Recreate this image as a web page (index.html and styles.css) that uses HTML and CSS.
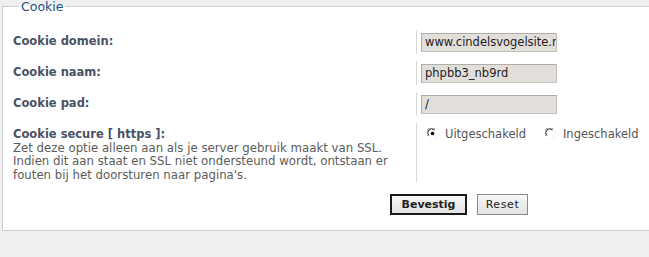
FILE: index.html
```html
<!DOCTYPE html>
<html>
<head>
<meta charset="utf-8">
<link rel="stylesheet" href="styles.css">
</head>
<body>
<fieldset class="panel">
  <legend class="panel-title">Cookie</legend>
  <div class="row">
    <div class="row-label"><span class="label">Cookie domein:</span></div>
    <div class="row-field"><span class="textbox">www.cindelsvogelsite.nl</span></div>
  </div>
  <div class="row">
    <div class="row-label"><span class="label">Cookie naam:</span></div>
    <div class="row-field"><span class="textbox">phpbb3_nb9rd</span></div>
  </div>
  <div class="row">
    <div class="row-label"><span class="label">Cookie pad:</span></div>
    <div class="row-field"><span class="textbox">/</span></div>
  </div>
  <div class="row row-tall">
    <div class="row-label">
      <span class="label">Cookie secure [ https ]:</span>
      <span class="explain">Zet deze optie alleen aan als je server gebruik maakt van SSL. Indien dit aan staat en SSL niet ondersteund wordt, ontstaan er fouten bij het doorsturen naar pagina's.</span>
    </div>
    <div class="row-field row-field-top">
      <span class="radio-opt">
        <svg class="radio" width="11" height="11" viewBox="0 0 11 11">
          <circle cx="5.5" cy="5.5" r="5" fill="#fff"/>
          <path d="M1.1 8 A4.6 4.6 0 0 1 8 1.1" fill="none" stroke="#7a7a7a" stroke-width="1"/>
          <path d="M2 7.4 A3.6 3.6 0 0 1 7.4 2" fill="none" stroke="#2a2a2a" stroke-width="1"/>
          <path d="M3 9.9 A4.6 4.6 0 0 0 9.9 3" fill="none" stroke="#e6e6e6" stroke-width="1"/>
          <circle cx="5.5" cy="5.5" r="1.8" fill="#000"/>
        </svg>
        <span class="radio-text">Uitgeschakeld</span>
      </span>
      <span class="radio-opt">
        <svg class="radio" width="11" height="11" viewBox="0 0 11 11">
          <circle cx="5.5" cy="5.5" r="5" fill="#fff"/>
          <path d="M1.1 8 A4.6 4.6 0 0 1 8 1.1" fill="none" stroke="#7a7a7a" stroke-width="1"/>
          <path d="M2 7.4 A3.6 3.6 0 0 1 7.4 2" fill="none" stroke="#2a2a2a" stroke-width="1"/>
          <path d="M3 9.9 A4.6 4.6 0 0 0 9.9 3" fill="none" stroke="#e6e6e6" stroke-width="1"/>
        </svg>
        <span class="radio-text">Ingeschakeld</span>
      </span>
    </div>
  </div>
  <div class="buttons">
    <span class="btn btn-default">Bevestig</span>
    <span class="btn btn-reset">Reset</span>
  </div>
</fieldset>
</body>
</html>
```
FILE: styles.css
```css
html {
  overflow: hidden;
}
body {
  margin: 0;
  background: #efefef;
  font-family: "DejaVu Sans", Verdana, sans-serif;
  font-size: 11.5px;
}
.panel {
  box-sizing: border-box;
  width: 914px;
  margin: 0 0 0 2px;
  padding: 17px 10px 15px 10px;
  background: #fff;
  border: 1px solid #cfcfcf;
  min-inline-size: 0;
}
.panel-title {
  padding: 0 2px;
  margin-left: 6px;
  font-size: 12.5px;
  line-height: 13px;
  color: #1a4f86;
}
.row {
  display: flex;
  margin-bottom: 7px;
}
.row-label {
  box-sizing: border-box;
  width: 404px;
  flex: none;
  padding: 5px 0 5.5px;
  line-height: 13.5px;
  border-right: 1px solid #d8d8d8;
}
.row-tall {
  margin-bottom: 12px;
}
.row-tall .row-label {
  padding-bottom: 0;
}
.label {
  display: block;
  font-weight: bold;
  color: #4a5263;
}
.explain {
  display: block;
  max-width: 390px;
  font-size: 11.75px;
  color: #5c5c5c;
}
.row-field {
  display: flex;
  align-items: center;
  padding-left: 4px;
}
.row-field-top {
  align-items: flex-start;
  padding-top: 5px;
  line-height: 13.5px;
}
.textbox {
  box-sizing: border-box;
  width: 136px;
  height: 19px;
  padding: 0 3px;
  line-height: 17px;
  overflow: hidden;
  white-space: nowrap;
  background: #e2dfdb;
  border: 1px solid #c4c1bd;
  border-top-color: #b0adaa;
  border-left-color: #b0adaa;
  color: #222;
}
.radio-opt {
  display: inline-flex;
  align-items: center;
  margin-left: 6px;
  margin-right: 13px;
}
.radio {
  flex: none;
  margin-right: 7px;
  margin-top: -3px;
}
.radio-text {
  color: #555;
}
.buttons {
  display: flex;
  justify-content: center;
  gap: 10px;
}
.btn {
  box-sizing: border-box;
  height: 21px;
  line-height: 19px;
  text-align: center;
  border: 1px solid #8a8a8a;
  background: linear-gradient(#f7f7f7, #e2e2e2);
  color: #222;
  font-size: 11px;
}
.btn-reset {
  width: 51px;
  letter-spacing: 0.6px;
}
.btn-default {
  width: 77px;
  border: 2px solid #1a1a1a;
  font-weight: bold;
  line-height: 17px;
}
```
